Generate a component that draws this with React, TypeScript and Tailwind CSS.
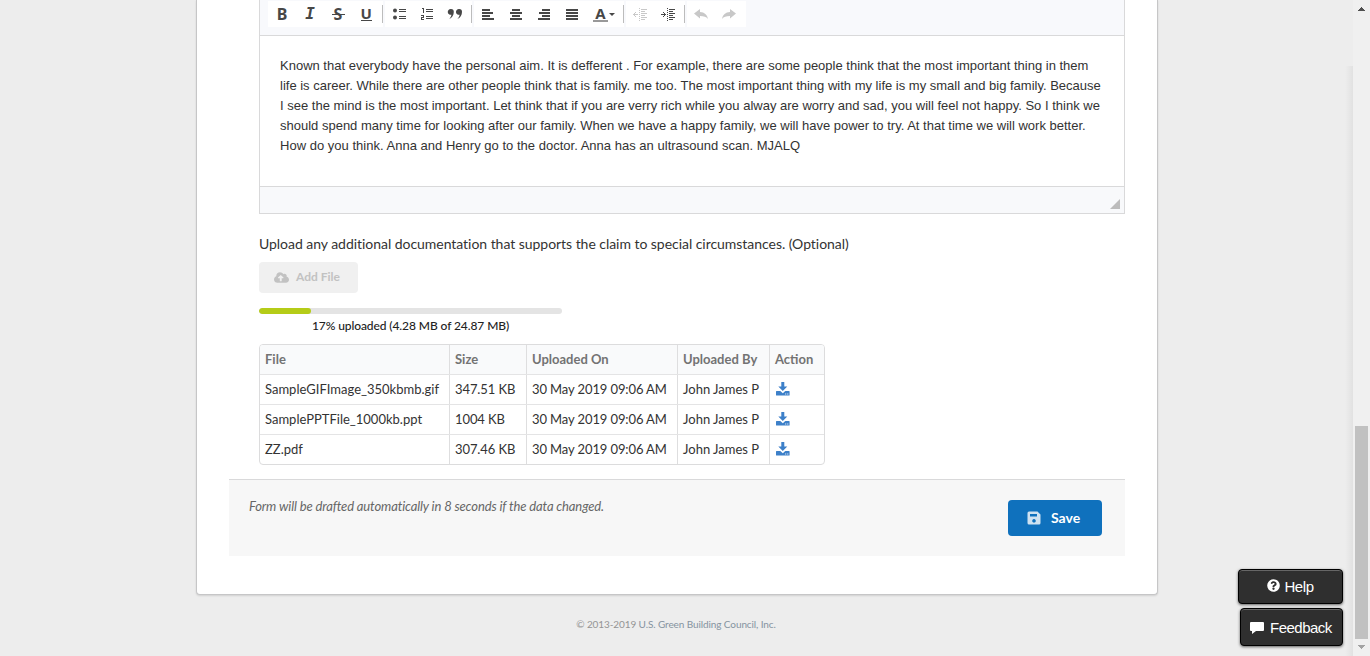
import React from "react";
import { FaCloudUploadAlt, FaQuestionCircle } from "react-icons/fa";

const ink = "#474747";

function Icon({ children, dim = false }: { children: React.ReactNode; dim?: boolean }) {
  return (
    <span className="flex h-[26px] w-7 items-center justify-center">
      <svg width="16" height="16" viewBox="0 0 16 16" fill={dim ? "#c8c8c8" : ink} shapeRendering="crispEdges">
        {children}
      </svg>
    </span>
  );
}

function Letter({ children, className = "" }: { children: React.ReactNode; className?: string }) {
  return (
    <span className={`flex h-[26px] w-7 items-center justify-center leading-none font-bold text-[#474747] ${className}`}>
      {children}
    </span>
  );
}

function Group({ children, last = false }: { children: React.ReactNode; last?: boolean }) {
  return (
    <div className={`mr-0.5 flex h-[26px] bg-white ${last ? "pr-[3px]" : ""}`}>
      {children}
      {!last && <span className="mt-1 ml-0.5 h-[18px] w-px bg-[#bcbcbc]" />}
    </div>
  );
}

function Lines({ rows }: { rows: [number, number][] }) {
  return (
    <Icon>
      {rows.map(([x, w], i) => (
        <rect key={i} x={x} y={3 + i * 3} width={w} height="2" />
      ))}
    </Icon>
  );
}

function IndentLines() {
  return (
    <>
      <path d="M9 3h6v1H9zM9 5h4v1H9zM9 7h6v1H9zM9 9h4v1H9zM9 11h6v1H9zM9 13h4v1H9z" />
      <path d="M7 2h1v1H7zM7 4h1v1H7zM7 6h1v1H7zM7 8h1v1H7zM7 10h1v1H7zM7 12h1v1H7zM7 14h1v1H7z" />
    </>
  );
}

function Toolbar() {
  return (
    <div className="flex h-[35px] bg-[#f8f9fc] pt-px pl-2">
      <Group>
        <Letter className="font-['Noto_Sans'] text-[16px]">B</Letter>
        <Letter className="font-['DejaVu_Sans_Mono'] text-[16px] italic">I</Letter>
        <Letter className="font-['Noto_Sans'] text-[16px]">
          <span className="relative">
            S
            <span className="absolute top-[8px] -left-[2px] h-px w-[13px] bg-[#474747]" />
          </span>
        </Letter>
        <span className="flex h-[26px] w-7 justify-center pt-[6px]">
          <span className="h-[14px] w-[11px] border-b border-[#474747] text-center font-['Noto_Sans'] text-[15px] leading-[12px] font-bold text-[#474747]">U</span>
        </span>
      </Group>
      <Group>
        <Icon>
          <path d="M8 3h7v1H8zM8 5h7v1H8zM8 10h7v1H8zM8 12h7v1H8z" />
          <g shapeRendering="auto"><circle cx="4" cy="4.5" r="2" /><circle cx="4" cy="11.5" r="2" /></g>
        </Icon>
        <Icon>
          <path d="M7 3h7v1H7zM7 5h7v1H7zM7 10h7v1H7zM7 12h7v1H7zM3 2h2v5H4V3H3zM2 9h3v3H3v1h2v1H2v-3h2v-1H2z" />
        </Icon>
        <Icon>
          <g shapeRendering="auto">
            <path d="M3.800 3a2.900 2.900 0 0 1 3 3c0 3.200-1.700 5.900-4.800 7.100 1.400-1.300 2.200-2.700 2.400-4.400A2.900 2.900 0 1 1 3.800 3zM12 3a2.900 2.900 0 0 1 3 3c0 3.200-1.700 5.900-4.800 7.100 1.400-1.300 2.200-2.700 2.400-4.400A2.900 2.900 0 1 1 12 3z" />
          </g>
        </Icon>
      </Group>
      <Group>
        <Lines rows={[[2, 8], [2, 11], [2, 8], [2, 12]]} />
        <Lines rows={[[4, 8], [2, 12], [4, 8], [2, 12]]} />
        <Lines rows={[[6, 8], [3, 11], [6, 8], [2, 12]]} />
        <Lines rows={[[2, 12], [2, 12], [2, 12], [2, 12]]} />
        <span className="flex w-[35px] pt-[5px] pl-[7px]">
          <span className="h-4 w-[15px] border-b-2 border-[#999] text-center font-['Noto_Sans'] text-[15px] leading-[14px] font-bold text-[#474747]">A</span>
          <span className="mt-[7px] ml-px size-0 border-x-[3px] border-t-[3px] border-x-transparent border-t-[#474747]" />
        </span>
      </Group>
      <Group>
        <Icon dim>
          <IndentLines />
          <path d="M1 8h5v1H1zM2 7h1v3H2zM3 6h1v1H3zM3 10h1v1H3z" />
        </Icon>
        <Icon>
          <IndentLines />
          <path d="M1 8h5v1H1zM4 7h1v3H4zM3 6h1v1H3zM3 10h1v1H3z" />
        </Icon>
      </Group>
      <Group last>
        <Icon dim>
          <path shapeRendering="auto" d="M1 7.500 7 3v3c4.500.2 7.200 2.600 8 7-1.800-2.200-4-3-8-3v2.500z" />
        </Icon>
        <Icon dim>
          <path shapeRendering="auto" d="M15 7.500 9 3v3c-4.500.2-7.200 2.600-8 7 1.800-2.200 4-3 8-3v2.500z" />
        </Icon>
      </Group>
    </div>
  );
}

const statement = [
  "Known that everybody have the personal aim. It is defferent . For example, there are some people think that the most important thing in them",
  "life is career. While there are other people think that is family. me too. The most important thing with my life is my small and big family. Because",
  "I see the mind is the most important. Let think that if you are verry rich while you alway are worry and sad, you will feel not happy. So I think we",
  "should spend many time for looking after our family. When we have a happy family, we will have power to try. At that time we will work better.",
  "How do you think. Anna and Henry go to the doctor. Anna has an ultrasound scan. MJALQ",
];

const files = [
  ["SampleGIFImage_350kbmb.gif", "347.51 KB"],
  ["SamplePPTFile_1000kb.ppt", "1004 KB"],
  ["ZZ.pdf", "307.46 KB"],
];

function DownloadIcon() {
  return (
    <svg className="-mt-px" width="14" height="14" viewBox="0 0 14 14" fill="#3d80c9">
      <path d="M5.300 0h3v4.500h3L6.800 9 2.300 4.500h3z" />
      <path fillRule="evenodd" d="M.6 9h3.700l2.500 2.200L9.300 9H13q.6 0 .6.600v3.300q0 .6-.6.600H.6Q0 13.500 0 12.900V9.600Q0 9 .6 9zM9.200 11.600h1v1h-1zM11.300 11.600h1v1h-1z" />
    </svg>
  );
}

const cols = "grid grid-cols-[189px_77px_151px_92px_55px]";
const cell = "border-l border-[#dededf] pl-[5px] whitespace-nowrap first:border-l-0";

function FileTable() {
  return (
    <div className="mt-[10px] h-[121px] w-[566px] overflow-hidden rounded-[4px] border border-[#dcdcdd] text-[13px] leading-[28px] text-[#333]">
      <div className={`${cols} h-[29px] bg-[#f9fafb] font-bold text-[#737373]`}>
        {["File", "Size", "Uploaded On", "Uploaded By", "Action"].map((h) => (
          <div key={h} className={cell}>{h}</div>
        ))}
      </div>
      {files.map(([name, size]) => (
        <div key={name} className={`${cols} h-[30px] border-t border-[#e4e4e5]`}>
          <div className={cell}>{name}</div>
          <div className={`${cell} tracking-[-0.1px]`}>{size}</div>
          <div className={`${cell} tracking-[-0.11px]`}>30 May 2019 09:06 AM</div>
          <div className={cell}>John James P</div>
          <div className={`${cell} flex items-center pb-px pl-[6px]`}><DownloadIcon /></div>
        </div>
      ))}
    </div>
  );
}

export default function App() {
  return (
    <div className="relative flex h-[656px] w-[1370px] overflow-hidden bg-[#ededed] font-['Lato',sans-serif]">
      <div className="w-[1353px] pl-[196px]">
        <main className="h-[595px] w-[962px] rounded-b-[4px] border-x border-b border-[#c6c6c7] bg-white pr-8 pl-8 shadow-[0_1px_2px_rgba(0,0,0,0.12)]">
          <div className="ml-[30px] w-[866px]">
            <div className="h-[214px] border-x border-b border-[#d9d9da]">
              <Toolbar />
              <div className="h-[151px] border-t border-[#d9d9da] pt-5 pl-5 font-['Liberation_Sans',sans-serif] text-[13px] leading-5 text-[#333]">
                {statement.map((line) => <p key={line} className="whitespace-pre last:tracking-[0.015px]">{line}</p>)}
              </div>
              <div className="flex h-[27px] items-end justify-end border-t border-[#d9d9da] bg-[#f8f9fb] pr-1 pb-1">
                <svg width="10" height="10" fill="#bcbcbc"><path d="M10 0v10H0z" /></svg>
              </div>
            </div>
            <p className="mt-5 h-5 text-[14px] leading-5 tracking-[-0.04px] whitespace-nowrap text-[#333]">
              Upload any additional documentation that supports the claim to special circumstances. (Optional)
            </p>
            <button className="mt-2 flex h-[31px] w-[99px] items-center rounded-[4px] bg-[#f0f0f0] pb-px pl-[15px] text-[12px] font-bold text-[#c2c2c2]">
              <FaCloudUploadAlt className="mr-[7px] size-[15px]" />
              Add File
            </button>
            <div className="mt-[15px] h-1.5 w-[303px] overflow-hidden rounded-full bg-[#e4e4e4]">
              <div className="h-full w-[52px] rounded-full bg-[#b5cc18]" />
            </div>
            <p className="mt-1 h-4 w-[303px] text-center text-[12px] leading-4 font-medium tracking-[-0.09px] text-[#222]">
              17% uploaded (4.28 MB of 24.87 MB)
            </p>
            <FileTable />
          </div>
          <div className="mt-[14px] flex h-[77px] w-[896px] justify-between border-t border-[#d9d9da] bg-[#f7f7f7] pt-5 pr-[23px] pl-5">
            <p className="-mt-1 text-[13px] leading-5 tracking-[-0.125px] text-[#666] italic">Form will be drafted automatically in 8 seconds if the data changed.</p>
            <button className="flex h-9 w-[94px] items-center rounded-[4px] bg-[#0f71bd] pl-[19px] text-[14px] font-bold text-white">
              <svg className="mr-[10px] -mt-px" width="14" height="14" viewBox="0 0 14 14" fill="#cfe2f1" fillRule="evenodd">
                <path d="M2 .5h8.500l3 3V12q0 1.500-1.500 1.500H2Q.5 13.500.5 12V2Q.5.500 2 .500zM3 3v2.500h7V3zM7 8a1.800 1.800 0 1 0 .01 0z" />
              </svg>
              <span className="-mt-0.5">Save</span>
            </button>
          </div>
        </main>
        <p className="mt-[21px] w-[960px] text-center text-[10px] leading-4 tracking-[-0.1px] text-[#949494]">
          © 2013-2019 <span className="text-[#8593a0]">U.S. Green Building Council, Inc.</span>
        </p>
      </div>
      <div className="flex w-[17px] flex-col items-center bg-[#f0f0f0]">
        <svg className="mt-[7px]" width="7" height="4" fill="#505050" shapeRendering="crispEdges"><path d="M3 0h1v1H3zM2 1h3v1H2zM1 2h5v1H1zM0 3h7v1H0z" /></svg>
        <div className="mt-[415px] h-[213px] w-[13px] bg-[#c1c1c1]" />
        <svg className="mt-[6px]" width="7" height="4" fill="#a3a3a3" shapeRendering="crispEdges"><path d="M0 0h7v1H0zM1 1h5v1H1zM2 2h3v1H2zM3 3h1v1H3z" /></svg>
      </div>
      <div className="absolute top-[66px] left-[1345px] h-[590px] w-2 bg-gradient-to-r from-transparent to-black/5" />
      <div className="absolute top-[569px] left-[1238px] flex flex-col items-end gap-1 font-['Liberation_Sans'] text-[15px] text-white">
        <button className="flex h-[35px] w-[105px] items-center justify-center rounded-[4px] border border-black bg-[#2f2f2f] tracking-[-0.4px] shadow-[0_1px_3px_rgba(0,0,0,0.6),inset_0_1px_0_#666]">
          <FaQuestionCircle className="mr-1 -mt-0.5 size-[13px]" />
          <span className="mt-0.5">Help</span>
        </button>
        <button className="flex h-[38px] w-[103px] items-center rounded-[4px] border border-black bg-[#2f2f2f] pl-[9px] tracking-[-0.5px] shadow-[0_1px_3px_rgba(0,0,0,0.6),inset_0_1px_0_#666]">
          <svg className="mr-1.5 mt-px" width="14" height="12" fill="white"><path d="M1 0h12q1 0 1 1v7q0 1-1 1H6l-4 3V9H1Q0 9 0 8V1q0-1 1-1z" /></svg>
          <span className="mt-0.5">Feedback</span>
        </button>
      </div>
    </div>
  );
}
